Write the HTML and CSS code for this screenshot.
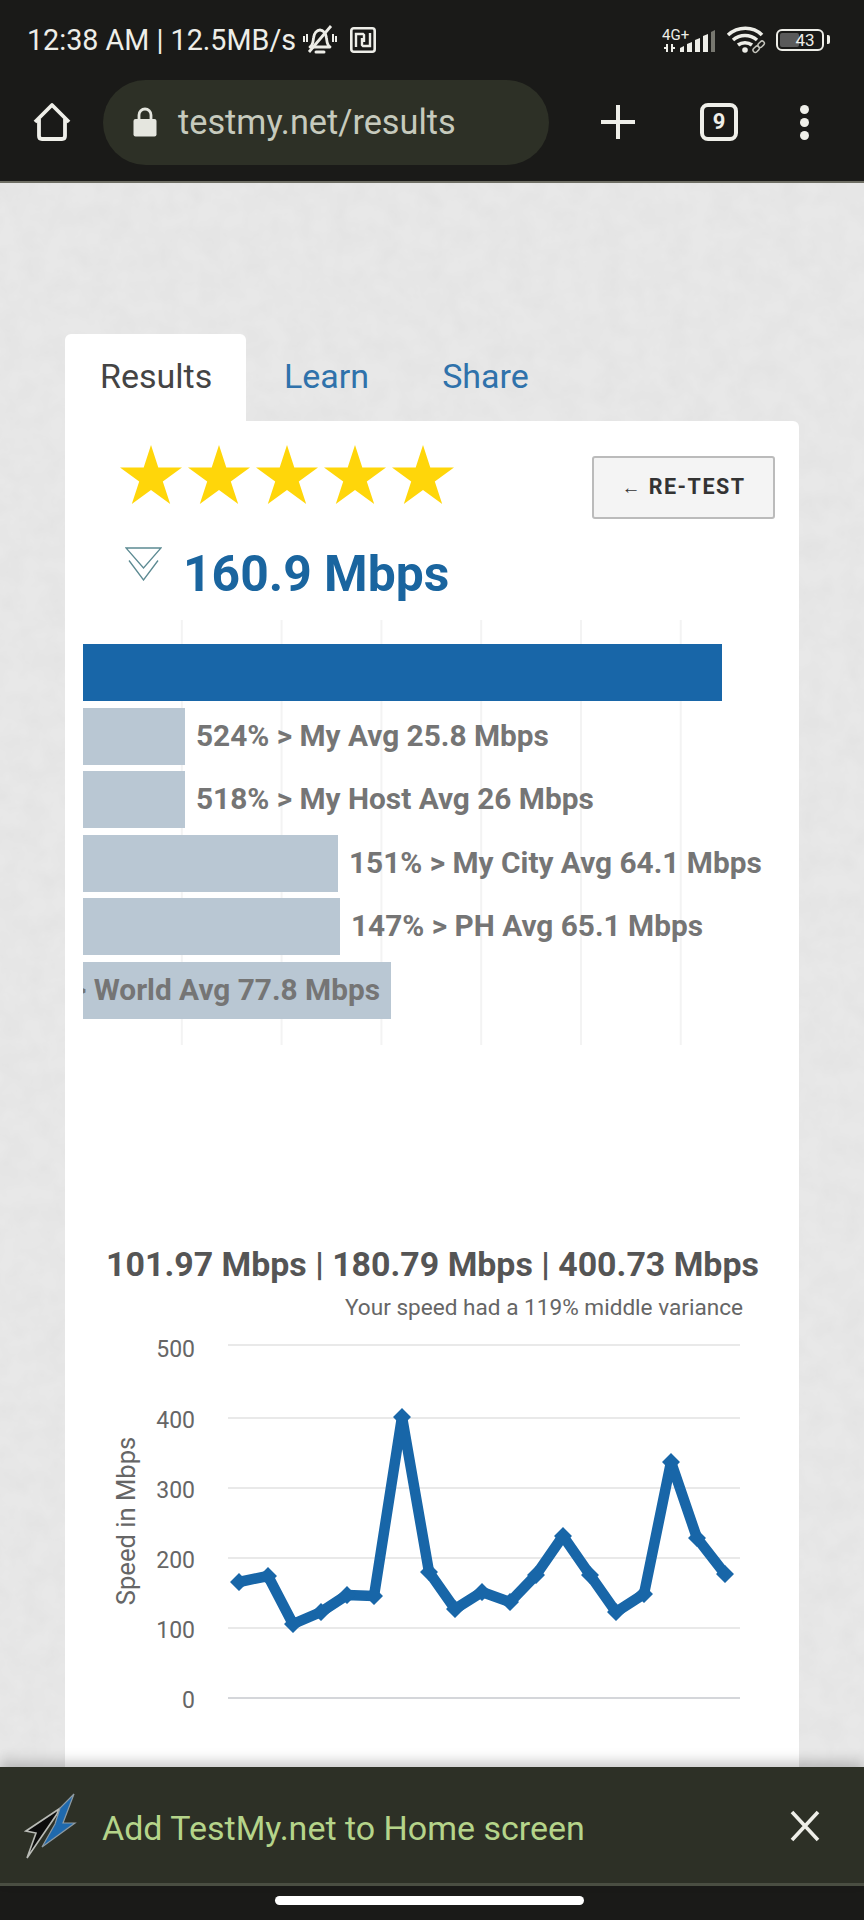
FILE: index.html
```html
<!DOCTYPE html>
<html>
<head>
    <meta charset="UTF-8">
    <title>Results - TestMy.net</title>
    <link rel="stylesheet" href="styles.css">
</head>
<body>
    <header class="topbar">
        <div class="status">
            <div class="status-left">
                <span>12:38 AM | 12.5MB/s</span>
                <svg class="bell" width="36" height="30" viewBox="0 0 36 30">
                    <path d="M8 22c3-2 3-5 3.500-9C12 8 15 5 18 5s6 3 6.500 8c.5 4 .5 7 3.500 9z" fill="none" stroke="#eeeee8" stroke-width="2.800" stroke-linejoin="round"/>
                    <path d="M14 27h8" stroke="#eeeee8" stroke-width="3" stroke-linecap="round"/>
                    <path d="M7 27 29 1" stroke="#eeeee8" stroke-width="2.800"/>
                    <path d="M2 11v6M5 9v8M31 9v8M34 11v6" stroke="#eeeee8" stroke-width="2"/>
                </svg>
                <svg class="nfc" width="26" height="26" viewBox="0 0 26 26">
                    <rect x="1.300" y="1.300" width="23.400" height="23.400" rx="2.500" fill="none" stroke="#eeeee8" stroke-width="2.600"/>
                    <path d="M6 20V7h7l1 1v7M20 6v13h-7l-1-1v-7" fill="none" stroke="#eeeee8" stroke-width="2.400"/>
                </svg>
            </div>
            <div class="status-right">
                <svg class="signal" width="56" height="30" viewBox="0 0 56 30">
                    <text x="0" y="15" class="net-type">4G+</text>
                    <path d="M5 19v8M2 23h3M10 19v8M10 23h3" stroke="#eeeee8" stroke-width="2"/>
                    <path d="M18 27v-4l4-2v6zM25 27v-8l5-2v10zM33 27V15l5-2v14zM41 27V11l5-2v18z" fill="#eeeee8"/>
                    <path d="M49 27V7l4-2v22z" fill="#77776f"/>
                </svg>
                <svg width="40" height="28" viewBox="0 0 40 28">
                    <path d="M2 9c10-9 25-9 34 0M7 14c7-6 17-6 24 0M12 19c4-3 10-3 14 0" fill="none" stroke="#eeeee8" stroke-width="3.600"/>
                    <circle cx="19" cy="24" r="2.800" fill="#eeeee8"/>
                    <g fill="#1a1a18" stroke="#c4c4bc" stroke-width="1.500">
                        <rect x="26.500" y="21" width="7" height="4.500" rx="2.200" transform="rotate(-45 30 23)"/>
                        <rect x="31.500" y="16" width="7" height="4.500" rx="2.200" transform="rotate(-45 35 18)"/>
                    </g>
                </svg>
                <div class="battery"><span class="battery-fill"></span><span class="battery-num">43</span></div>
            </div>
        </div>
        <div class="toolbar">
            <svg class="home" width="40" height="40" viewBox="0 0 40 40">
                <path d="M3 20 20 3l17 17M7 17v17c0 2 1 3 3 3h20c2 0 3-1 3-3V17" fill="none" stroke="#efefe9" stroke-width="3.800" stroke-linejoin="round"/>
            </svg>
            <div class="urlbar">
                <svg width="24" height="30" viewBox="0 0 24 30">
                    <path d="M6 13V8a6 6 0 0 1 12 0v5" fill="none" stroke="#e5e6df" stroke-width="2.800"/>
                    <rect x="0.500" y="12" width="23" height="17.500" rx="2" fill="#e5e6df"/>
                </svg>
                <span class="url">testmy.net/results</span>
            </div>
            <svg class="plus" width="36" height="36" viewBox="0 0 36 36">
                <path d="M18 1v34M1 18h34" stroke="#efefe9" stroke-width="4"/>
            </svg>
            <div class="tabcount">9</div>
            <div class="dots"><i></i><i></i><i></i></div>
        </div>
    </header>

    <main class="page">
        <!-- paper grain behind the card -->
        <svg class="grain" width="864" height="1600">
            <filter id="grain">
                <feTurbulence type="fractalNoise" baseFrequency="0.045" numOctaves="3" seed="4"/>
                <feColorMatrix values="0 0 0 0 0.45  0 0 0 0 0.45  0 0 0 0 0.45  0 0 0.14 0 -0.04"/>
            </filter>
            <rect width="864" height="1600" filter="url(#grain)"/>
        </svg>
        <nav class="tabs">
            <a class="tab active">Results</a>
            <a class="tab">Learn</a>
            <a class="tab share">Share</a>
        </nav>
        <section class="card">
            <svg width="0" height="0" class="defs">
                <defs>
                    <polygon id="star" points="31,0 38.300,22.500 62,22.500 42.800,36.400 50.200,59 31,45 11.800,59 19.200,36.400 0,22.500 23.700,22.500"/>
                </defs>
            </svg>
            <div class="top-row">
                <div class="stars">
                    <svg width="62" height="59"><use href="#star"/></svg>
                    <svg width="62" height="59"><use href="#star"/></svg>
                    <svg width="62" height="59"><use href="#star"/></svg>
                    <svg width="62" height="59"><use href="#star"/></svg>
                    <svg width="62" height="59"><use href="#star"/></svg>
                </div>
                <button class="retest"><span class="arrow">←</span> RE-TEST</button>
            </div>
            <div class="speed-row">
                <svg width="37" height="34" viewBox="0 0 37 34">
                    <path d="M1 1h35L18.500 21zM4 13.500 18.500 33 33 13.500" fill="none" stroke="#5c8a92" stroke-width="1.300"/>
                </svg>
                <span class="speed">160.9 Mbps</span>
            </div>

            <div class="bars">
                <div class="bar-row"><div class="bar main" style="width: 639px"></div></div>
                <div class="bar-row"><div class="bar" style="width: 102px"></div><span class="bar-label">524% &gt; My Avg 25.8 Mbps</span></div>
                <div class="bar-row"><div class="bar" style="width: 102px"></div><span class="bar-label">518% &gt; My Host Avg 26 Mbps</span></div>
                <div class="bar-row"><div class="bar" style="width: 255px"></div><span class="bar-label">151% &gt; My City Avg 64.1 Mbps</span></div>
                <div class="bar-row"><div class="bar" style="width: 257px"></div><span class="bar-label">147% &gt; PH Avg 65.1 Mbps</span></div>
                <div class="bar-row"><div class="bar inside" style="width: 308px"><span class="bar-label">&gt; World Avg 77.8 Mbps</span></div></div>
            </div>

            <h2 class="spread">101.97 Mbps | 180.79 Mbps | 400.73 Mbps</h2>
            <p class="variance">Your speed had a 119% middle variance</p>

            <!-- viewBox uses the same numbers as the screen so points are easy to read off -->
            <svg class="line-chart" width="692" height="420" viewBox="83 1325 692 420">
                <g class="grid">
                    <path d="M228 1345h512M228 1418h512M228 1488h512M228 1558h512M228 1628h512"/>
                    <path class="axis" d="M228 1698h512"/>
                </g>
                <g class="y-labels">
                    <text x="195" y="1357">500</text>
                    <text x="195" y="1428">400</text>
                    <text x="195" y="1498">300</text>
                    <text x="195" y="1568">200</text>
                    <text x="195" y="1638">100</text>
                    <text x="195" y="1708">0</text>
                </g>
                <text class="y-title" transform="translate(135 1521) rotate(-90)">Speed in Mbps</text>
                <polyline class="line" points="239,1582 268,1576 293,1624 321,1612 347,1595 374,1596 402,1417 429,1572 455,1609 482,1592 510,1602 536,1575 563,1536 590,1575 616,1612 644,1594 671,1462 697,1538 725,1574"/>
                <path class="marks" d="M239 1573l9 9-9 9-9-9zM268 1567l9 9-9 9-9-9zM293 1615l9 9-9 9-9-9zM321 1603l9 9-9 9-9-9zM347 1586l9 9-9 9-9-9zM374 1587l9 9-9 9-9-9zM402 1408l9 9-9 9-9-9zM429 1563l9 9-9 9-9-9zM455 1600l9 9-9 9-9-9zM482 1583l9 9-9 9-9-9zM510 1593l9 9-9 9-9-9zM536 1566l9 9-9 9-9-9zM563 1527l9 9-9 9-9-9zM590 1566l9 9-9 9-9-9zM616 1603l9 9-9 9-9-9zM644 1585l9 9-9 9-9-9zM671 1453l9 9-9 9-9-9zM697 1529l9 9-9 9-9-9zM725 1565l9 9-9 9-9-9z"/>
            </svg>
        </section>
    </main>

    <footer class="banner">
        <svg class="bolt" width="56" height="68" viewBox="24 1791 56 68">
            <path d="M59 1808 26 1830l10 2-9 25 30-44z" fill="#0c0c0c" stroke="#b9bbb6" stroke-width="1.600"/>
            <path d="M74 1793 60 1807l-5 16-13 23 33-24H63z" fill="#1f69ad" stroke="#8d9aa2" stroke-width="1.200"/>
        </svg>
        <span class="banner-text">Add TestMy.net to Home screen</span>
        <svg class="close" width="32" height="32" viewBox="0 0 32 32">
            <path d="M3 2l26 28M29 2 3 30" stroke="#eeeee8" stroke-width="3.600"/>
        </svg>
    </footer>
    <div class="navbar"><span class="pill"></span></div>
</body>
</html>
```

FILE: styles.css
```css
* {
    box-sizing: border-box;
}

html, body {
    margin: 0;
    height: 1920px;
    overflow: hidden;
}

body {
    display: flex;
    flex-direction: column;
    font-family: Roboto, Arial, sans-serif;
    background-color: #e8e8e8;
}

/* browser top */
.topbar {
    flex: none;
    height: 183px;
    background-color: #1a1a18;
    border-bottom: 2px solid #6e6e64;
}

.status {
    display: flex;
    justify-content: space-between;
    align-items: center;
    height: 79px;
    padding: 0 34px 0 27px;
    color: #eeeee8;
    font-size: 28.700px;
}

.status-left {
    display: flex;
    align-items: center;
    gap: 6px;
}

.status-left .nfc {
    margin-left: 6px;
}

.status-right {
    display: flex;
    align-items: center;
    gap: 8px;
}

.net-type {
    fill: #eeeee8;
    font-size: 15px;
}

.battery {
    position: relative;
    width: 48px;
    height: 22px;
    margin: 0 6px 0 2px;
    border: 2px solid #eeeee8;
    border-radius: 6px;
    font-size: 17px;
    text-align: center;
    line-height: 18px;
}

.battery::after {
    content: "";
    position: absolute;
    left: 49px;
    top: 4px;
    width: 3px;
    height: 9px;
    background-color: #eeeee8;
    border-radius: 0 2px 2px 0;
}

.battery-fill {
    position: absolute;
    left: 2px;
    top: 2px;
    width: 19px;
    height: 14px;
    background-color: #5a5a5a;
    border-radius: 2px;
}

.battery-num {
    position: relative;
    margin-left: 10px;
}

.toolbar {
    display: flex;
    align-items: center;
    height: 86px;
}

.home {
    margin-left: 32px;
}

.urlbar {
    display: flex;
    align-items: center;
    gap: 21px;
    width: 446px;
    height: 85px;
    margin-left: 31px;
    padding-left: 30px;
    border-radius: 43px;
    background-color: #2d3026;
}

.url {
    color: #c6cabd;
    font-size: 34.300px;
}

.plus {
    margin-left: 51px;
}

.tabcount {
    width: 38px;
    height: 38px;
    margin-left: 64px;
    border: 4px solid #efefe9;
    border-radius: 8px;
    color: #efefe9;
    font-size: 22px;
    font-weight: bold;
    line-height: 29px;
    text-align: center;
}

.dots {
    display: flex;
    flex-direction: column;
    gap: 4px;
    margin-left: 62px;
}

.dots i {
    width: 9px;
    height: 9px;
    border-radius: 50%;
    background-color: #efefe9;
}

/* page */
.page {
    position: relative;
    isolation: isolate;
    flex: 1;
    min-height: 0;
    padding: 151px 0 0 65px;
    overflow: hidden;
}

.grain {
    position: absolute;
    left: 0;
    top: 0;
    z-index: -1;
}

.tabs {
    display: flex;
    gap: 2px;
}

.tab {
    height: 87px;
    padding: 22px 36px 0;
    color: #2f72ab;
    font-size: 34px;
}

.tab.share {
    padding-left: 35px;
}

.tab.active {
    width: 181px;
    padding-left: 35px;
    border-radius: 6px 6px 0 0;
    background-color: #fff;
    color: #444;
}

.card {
    width: 734px;
    height: 1420px;
    padding: 0 24px 0 18px;
    border-radius: 0 6px 6px 6px;
    background-color: #fff;
}

.defs {
    position: absolute;
}

.top-row {
    display: flex;
    justify-content: space-between;
    align-items: flex-start;
    height: 100px;
    padding-top: 24px;
}

.stars {
    display: flex;
    gap: 6px;
    margin-left: 37px;
    fill: #ffd60a;
}

.retest {
    width: 183px;
    height: 63px;
    margin-top: 11px;
    padding: 0 0 2px;
    border: 2px solid #bbb;
    border-radius: 3px;
    background-color: #f4f4f4;
    color: #333;
    font-family: Roboto, Arial, sans-serif;
    font-size: 21.500px;
    font-weight: bold;
    letter-spacing: 1.500px;
}

.retest .arrow {
    font-size: 19px;
    font-weight: normal;
}

.speed-row {
    display: flex;
    align-items: flex-start;
    gap: 21px;
    height: 99px;
    padding: 26px 0 0 42px;
}

.speed {
    margin-top: -3px;
    color: #1a659f;
    font-size: 49.800px;
    font-weight: bold;
    line-height: 60px;
}

.bars {
    display: flex;
    flex-direction: column;
    gap: 6.600px;
    width: 599px;
    height: 425px;
    padding-top: 24px;
    background-image: linear-gradient(to right, transparent 97.800px, #f3f3f3 97.800px, #f3f3f3 99.800px);
    background-size: 99.800px 100%;
}

.bar-row {
    display: flex;
    align-items: center;
    flex: none;
    gap: 11px;
    height: 57px;
    white-space: nowrap;
}

.bar {
    flex: none;
    height: 57px;
    background-color: #b9c7d3;
}

.bar.main {
    background-color: #1866a8;
}

.bar.inside {
    display: flex;
    justify-content: flex-end;
    align-items: center;
    padding-right: 11px;
    overflow: hidden;
}

.bar-label {
    margin-top: -2px;
    color: #757575;
    font-size: 29.800px;
    font-weight: bold;
}

.spread {
    margin: 196px 0 0;
    padding-left: 7px;
    color: #555;
    font-size: 33.900px;
    font-weight: bold;
    line-height: 48px;
    text-align: center;
}

.variance {
    margin: 3px 0 0;
    padding-right: 32px;
    color: #666;
    font-size: 22.600px;
    line-height: 32px;
    text-align: right;
}

.line-chart {
    display: block;
    margin-top: 1px;
}

.grid path {
    fill: none;
    stroke: #e9e9e9;
    stroke-width: 2;
}

.grid .axis {
    stroke: #d4d6da;
}

.y-labels text {
    fill: #666;
    font-size: 23px;
    text-anchor: end;
}

.y-title {
    fill: #666;
    font-size: 25.600px;
    text-anchor: middle;
}

.line {
    fill: none;
    stroke: #1866a8;
    stroke-width: 10.500;
    stroke-linejoin: round;
}

.marks {
    fill: #1866a8;
}

/* add to home screen strip */
.banner {
    flex: none;
    display: flex;
    align-items: center;
    height: 119px;
    padding: 2px 43px 0 24px;
    background-color: #2d3026;
    border-bottom: 3px solid #4a4e42;
    box-shadow: 0 -6px 12px rgba(0, 0, 0, 0.2);
    z-index: 1;
}

.banner-text {
    flex: 1;
    margin: 3px 0 0 22px;
    color: #b5d48a;
    font-size: 34px;
}

.navbar {
    flex: none;
    display: flex;
    justify-content: center;
    height: 34px;
    padding: 10px 5px 0 0;
    background-color: #1a1a18;
}

.pill {
    width: 309px;
    height: 9px;
    border-radius: 5px;
    background-color: #fff;
}
```
